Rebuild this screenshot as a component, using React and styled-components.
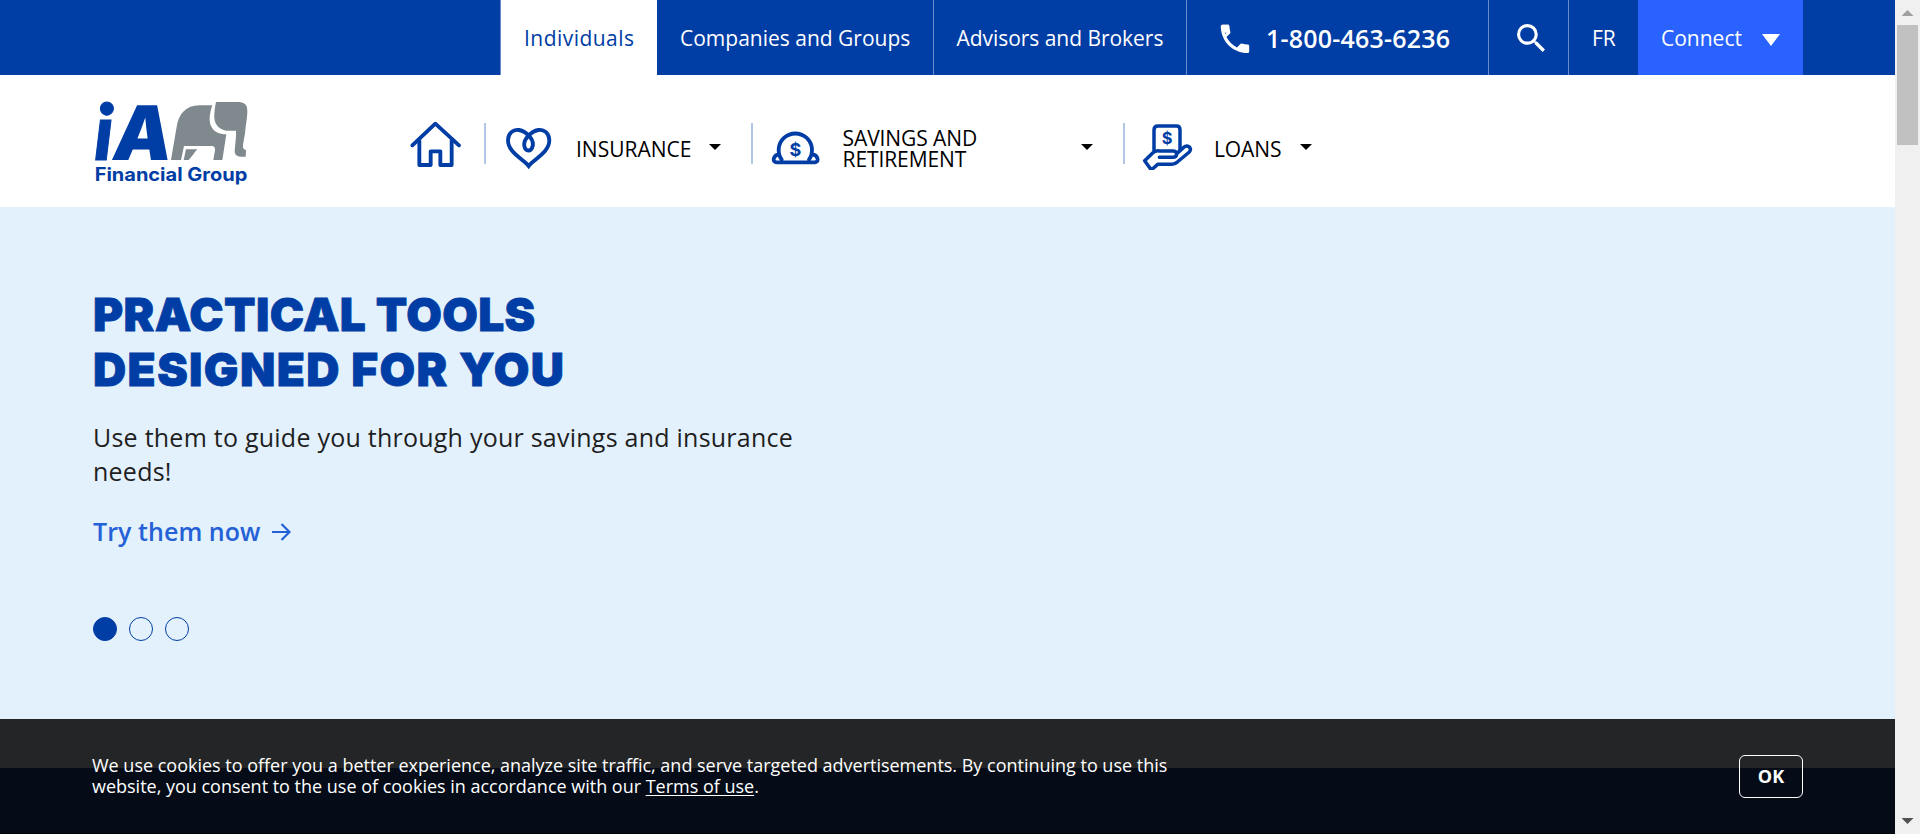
import React from 'react';
import styled, { createGlobalStyle } from 'styled-components';

const BLUE = '#003da5';

const GlobalStyle = createGlobalStyle`
  *, *::before, *::after { box-sizing: border-box; }
  body { margin: 0; overflow: hidden; background: #e3f1fc; font-family: 'Open Sans', 'Noto Sans', sans-serif; }
  a { color: inherit; text-decoration: none; }
`;

const Screen = styled.div`
  display: flex;
  width: 1920px;
  height: 834px;
  overflow: hidden;
`;
const Page = styled.div`
  position: relative;
  width: 1895px;
  height: 834px;
`;

/* Top bar */
const TopBar = styled.nav`
  display: flex;
  height: 75px;
  padding-left: 500px;
  background: ${BLUE};
  color: #fff;
`;
const TopItem = styled.a`
  display: flex;
  align-items: center;
  width: ${(p) => p.$w}px;
  height: 75px;
  padding: 0 0 0 ${(p) => p.$pad || 23}px;
  border-left: ${(p) => (p.$plain ? '0' : '1px solid #6a8dca')};
  background: ${(p) => p.$bg || 'transparent'};
  color: ${(p) => p.$fg || '#fff'};
  font-size: 21px;
  font-weight: ${(p) => p.$weight || 400};
  letter-spacing: ${(p) => p.$ls || 0}px;
  white-space: nowrap;
`;
const Phone = styled.span`
  margin-left: 16px;
  font-size: 25px;
  font-weight: 600;
  letter-spacing: 0.2px;
`;
const Triangle = styled.span`
  width: 18px;
  height: 12px;
  margin: 5px 23px 0 auto;
  background: #fff;
  clip-path: polygon(0 0, 100% 0, 50% 100%);
`;

/* Main header */
const Header = styled.header`
  display: flex;
  height: 132px;
  padding-left: 93px;
  background: #fff;
`;
const Logo = styled.svg`
  width: 160px;
  height: 100px;
  margin-top: 15px;
  overflow: visible;
`;
const MainNav = styled.div`
  display: flex;
  margin-top: 43px;
  margin-left: 155px;
`;
const NavItem = styled.a`
  display: flex;
  align-items: center;
  width: ${(p) => p.$w}px;
  height: 50px;
  color: #000;
`;
const NavIcon = styled.svg`
  flex: none;
  width: 54px;
  height: 54px;
  margin-left: ${(p) => p.$ml || 0}px;
  fill: none;
  stroke: ${BLUE};
  stroke-width: ${(p) => p.$stroke || 11.5};
  stroke-linejoin: round;
  stroke-linecap: round;
`;
const NavLabel = styled.span`
  width: ${(p) => p.$w}px;
  margin: ${(p) => p.$mt || 13}px 0 0 ${(p) => p.$ml}px;
  font-size: 21px;
  line-height: 21px;
  letter-spacing: ${(p) => p.$ls || 0}px;
`;
const Caret = styled.span`
  width: 12px;
  height: 6px;
  margin-top: 8px;
  margin-right: ${(p) => p.$mr}px;
  margin-left: auto;
  background: #000;
  clip-path: polygon(0 0, 100% 0, 50% 100%);
`;
const Divider = styled.span`
  flex: none;
  width: 2px;
  height: 41px;
  margin-top: 5px;
  background: #b2c5e4;
`;

/* Hero */
const Hero = styled.main`
  height: 561px;
  padding: 80px 0 0 93px;
  background: #e3f1fc;
`;
const Title = styled.h1`
  margin: 0;
  color: ${BLUE};
  font: 900 46px/55px Inter, 'Open Sans', sans-serif;
  -webkit-text-stroke: 0.8px ${BLUE};
`;
const TitleLine = styled.span`
  display: block;
  letter-spacing: ${(p) => p.$ls}px;
`;
const Lead = styled.p`
  width: 730px;
  margin: 23px 0 0;
  color: #1f1f1f;
  font-size: 25px;
  line-height: 34px;
  letter-spacing: 0.24px;
`;
const Cta = styled.a`
  display: flex;
  align-items: center;
  height: 34px;
  margin-top: 26px;
  color: #2460d6;
  font-size: 25px;
  font-weight: 600;
  letter-spacing: 0.06px;
`;
const CtaArrow = styled.svg`
  width: 19px;
  height: 18px;
  margin: 2px 0 0 11px;
  fill: none;
  stroke: currentColor;
  stroke-width: 2.2;
`;
const Dots = styled.div`
  display: flex;
  gap: 12px;
  margin-top: 69px;
`;
const Dot = styled.button`
  width: 24px;
  height: 24px;
  padding: 0;
  border: 1px solid ${BLUE};
  border-radius: 50%;
  background: ${(p) => (p.$active ? BLUE : 'transparent')};
`;
const Below = styled.section`
  height: 66px;
  background: #20529f;
`;

/* Cookie notice overlays the page */
const Cookie = styled.aside`
  position: absolute;
  left: 0;
  right: 0;
  bottom: 0;
  display: flex;
  justify-content: space-between;
  height: 115px;
  padding: 36px 92px 0 92px;
  background: linear-gradient(#242526 0 49px, #050c18 49px 114px, #01040b 114px);
  color: #fff;
`;
const CookieText = styled.p`
  margin: 0;
  font-size: 18px;
  line-height: 21px;
  letter-spacing: -0.01px;
  white-space: nowrap;
  u { text-underline-offset: 2px; }
`;
const OkButton = styled.button`
  width: 64px;
  height: 43px;
  padding: 0 0 2px;
  border: 1px solid #fff;
  border-radius: 6px;
  background: transparent;
  color: #fff;
  font: 700 18px 'Open Sans', sans-serif;
`;

/* Scrollbar */
const Track = styled.div`
  display: flex;
  flex-direction: column;
  align-items: center;
  width: 25px;
  height: 834px;
  background: #f0f0f0;
`;
const ScrollArrow = styled.span`
  width: 12px;
  height: 6px;
  margin-top: ${(p) => (p.$down ? 'auto' : '10px')};
  margin-bottom: ${(p) => (p.$down ? '10px' : '9px')};
  background: ${(p) => (p.$down ? '#505050' : '#a0a0a0')};
  clip-path: ${(p) => (p.$down ? 'polygon(0 0,100% 0,50% 100%)' : 'polygon(50% 0,100% 100%,0 100%)')};
`;
const Thumb = styled.span`
  width: 21px;
  height: 120px;
  background: #c1c1c1;
`;

function BrandLogo() {
  return (
    <Logo viewBox="39 0 480 300" aria-label="iA Financial Group">
      <g fill={BLUE}>
        <text x="42" y="210" fontFamily="Lato" fontWeight="900" fontStyle="italic" fontSize="234" stroke={BLUE} strokeWidth="3">i</text>
        <text transform="translate(91 210) skewX(-8)" fontFamily="Inter" fontWeight="900" fontSize="226" textLength="177" lengthAdjust="spacingAndGlyphs">A</text>
        <text x="44" y="274" fontFamily="Inter" fontWeight="700" fontSize="55" textLength="458" lengthAdjust="spacingAndGlyphs">Financial Group</text>
      </g>
      <g fill="#7f898e">
        <path d="M273 210L290 110C296 72 318 46 358 46H397C389 69 386 91 393 108C401 125 417 133 439 133L427 210H400L405 181Q406 168 395 168H312L303 210Z" />
        <path d="M318 178H352Q346 184 339 194L326 210H311Z" />
        <path d="M408 36H478Q503 38 502 62C502 82 498 100 495 130L489 164Q487 178 498 180L497 200H482Q463 199 464 182L467 150Q469 135 468 122H440C420 120 405 105 403 85C402 70 405 50 408 36Z" />
      </g>
    </Logo>
  );
}

function Dollar({ x, y, size }) {
  return (
    <text x={x} y={y} fill={BLUE} stroke="none" textAnchor="middle" fontFamily="Inter" fontWeight="700" fontSize={size}>$</text>
  );
}

export default function App() {
  return (
    <Screen>
      <GlobalStyle />
      <Page>
        <TopBar>
          <TopItem $w={157} $bg="#fff" $fg={BLUE} $weight={500} $ls={0.46}>Individuals</TopItem>
          <TopItem $w={276} $plain>Companies and Groups</TopItem>
          <TopItem $w={253} $pad={22.5} $ls={-0.04}>Advisors and Brokers</TopItem>
          <TopItem $w={302} $pad={33}>
            <svg width="30" height="30" viewBox="2.5 1.9 19 19" fill="#fff">
              <path d="M6.54 5c.06.89.21 1.76.45 2.59l-1.2 1.2c-.41-1.2-.67-2.47-.76-3.79zM20 15.5c-1.25 0-2.45-.2-3.57-.57a1.02 1.02 0 0 0-1.02.24l-2.2 2.2a15.1 15.1 0 0 1-6.59-6.58l2.2-2.21c.28-.27.36-.66.25-1.01A11.4 11.4 0 0 1 8.5 4c0-.55-.45-1-1-1H4c-.55 0-1 .45-1 1 0 9.39 7.61 17 17 17 .55 0 1-.45 1-1v-3.5c0-.55-.45-1-1-1z" />
              <path d="M4 3h4v5H5z" />
            </svg>
            <Phone>1-800-463-6236</Phone>
          </TopItem>
          <TopItem $w={80} $pad={27.5}>
            <svg width="28" height="28" viewBox="3 3 17.5 17.5" fill="#fff">
              <path d="M15.5 14h-.79l-.28-.27A6.47 6.47 0 0 0 16 9.5 6.5 6.5 0 1 0 9.5 16c1.61 0 3.09-.59 4.23-1.57l.27.28v.79l5 4.99L20.49 19l-4.99-5zm-6 0C7.01 14 5 11.99 5 9.5S7.01 5 9.5 5 14 7.01 14 9.5 11.99 14 9.5 14z" />
            </svg>
          </TopItem>
          <TopItem $w={70} $pad={23}>FR</TopItem>
          <TopItem $w={165} $bg="#2962ff" $plain>
            Connect
            <Triangle />
          </TopItem>
        </TopBar>

        <Header>
          <BrandLogo />
          <MainNav>
            <NavItem $w={76}>
              <NavIcon viewBox="24 18 162 162">
                <path d="M37 106L106 41L177 106M58 92V165H92V124H121V165H155V92" />
              </NavIcon>
            </NavItem>
            <Divider />
            <NavItem $w={265}>
              <NavIcon $ml={16} viewBox="306 18 162 162">
                <path strokeLinejoin="miter" d="M386 168C370 147 324 128 324 91C324 70 340 57 357 60C379 64 403 88 398 108C394 126 376 126 373 108C369 88 393 64 415 60C432 57 448 70 448 91C448 128 402 147 386 168Z" />
              </NavIcon>
              <NavLabel $w={122} $ml={20}>INSURANCE</NavLabel>
              <Caret $mr={30} />
            </NavItem>
            <Divider />
            <NavItem $w={370}>
              <NavIcon $ml={15} viewBox="84 18 162 162">
                <path d="M125 149A50 50 0 1 1 207 149" />
                <path d="M108 157H226M108 157Q98 153 102 144Q105 136 114 134M226 157Q236 153 232 144Q229 136 220 134" />
                <Dollar x={166} y={137} size={54} />
              </NavIcon>
              <NavLabel $w={200} $ml={20.5} $mt={11} $ls={-0.08}>SAVINGS AND RETIREMENT</NavLabel>
              <Caret $mr={30} />
            </NavItem>
            <Divider />
            <NavItem $w={220}>
              <NavIcon $ml={16} $stroke={10.5} viewBox="183 18 162 162">
                <path d="M222 121V60Q222 48 234 48H290Q300 48 300 60V120" />
                <path d="M238 142H278Q290 142 290 132Q290 123 278 123H238Q226 121 218 129L194 152L214 180L233 163H276Q285 163 292 156L328 126Q335 117 327 110Q319 105 311 112L291 130" />
                <Dollar x={261} y={102} size={49} />
              </NavIcon>
              <NavLabel $w={72} $ml={19} $ls={-0.1}>LOANS</NavLabel>
              <Caret $mr={33} />
            </NavItem>
          </MainNav>
        </Header>

        <Hero>
          <Title>
            <TitleLine $ls={0.36}>PRACTICAL TOOLS</TitleLine>
            <TitleLine $ls={1.35}>DESIGNED FOR YOU</TitleLine>
          </Title>
          <Lead>Use them to guide you through your savings and insurance needs!</Lead>
          <Cta>
            Try them now
            <CtaArrow viewBox="0 0 19 18"><path d="M0 9H17.5M9.5 1L17.5 9L9.5 17" /></CtaArrow>
          </Cta>
          <Dots>
            <Dot $active />
            <Dot />
            <Dot />
          </Dots>
        </Hero>
        <Below />

        <Cookie>
          <CookieText>
            We use cookies to offer you a better experience, analyze site traffic, and serve targeted advertisements. By continuing to use this
            <br />
            website, you consent to the use of cookies in accordance with our <u>Terms of use</u>.
          </CookieText>
          <OkButton>OK</OkButton>
        </Cookie>
      </Page>
      <Track>
        <ScrollArrow />
        <Thumb />
        <ScrollArrow $down />
      </Track>
    </Screen>
  );
}
